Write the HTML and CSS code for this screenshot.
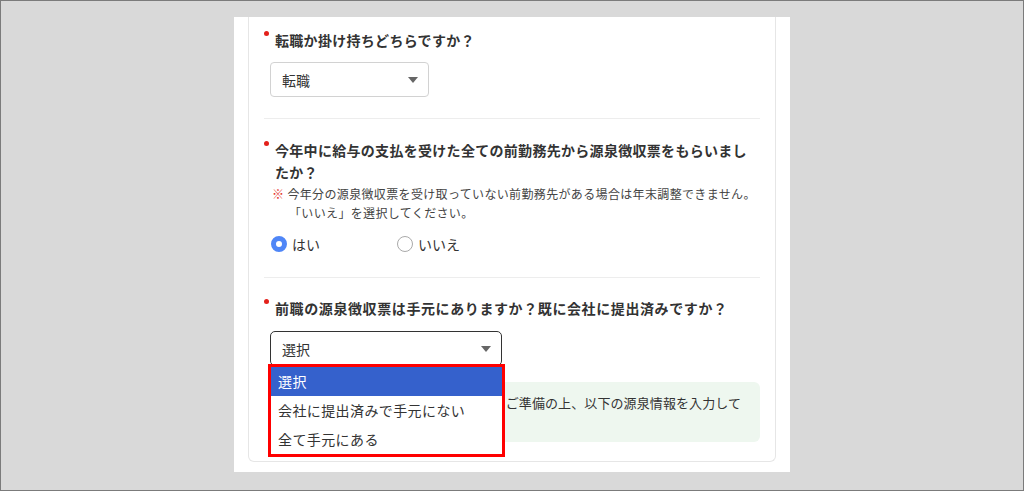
FILE: index.html
```html
<!DOCTYPE html>
<html lang="ja">

<head>
    <meta charset="UTF-8">
    <meta name="viewport" content="width=device-width, initial-scale=1.0">
    <title>源泉徴収票の確認</title>
    <link rel="stylesheet" href="styles.css">
</head>

<body>
    <div class="frame">
        <div class="panel">
            <div class="card">

                <div class="question q1">
                    <div class="qTitle">
                        <span class="required"></span>
                        <span class="qText">転職か掛け持ちどちらですか？</span>
                    </div>
                    <div class="select selectSmall">
                        <span>転職</span>
                        <span class="arrow"></span>
                    </div>
                </div>

                <div class="question q2">
                    <div class="qTitle">
                        <span class="required"></span>
                        <span class="qText">今年中に給与の支払を受けた全ての前勤務先から源泉徴収票をもらいましたか？</span>
                    </div>
                    <p class="note"><span class="mark">※</span> 今年分の源泉徴収票を受け取っていない前勤務先がある場合は年末調整できません。<br>「いいえ」を選択してください。</p>
                    <div class="radios">
                        <div class="radio">
                            <span class="radioIcon checked"></span>
                            <span>はい</span>
                        </div>
                        <div class="radio">
                            <span class="radioIcon"></span>
                            <span>いいえ</span>
                        </div>
                    </div>
                </div>

                <div class="question q3">
                    <div class="qTitle">
                        <span class="required"></span>
                        <span class="qText wide">前職の源泉徴収票は手元にありますか？既に会社に提出済みですか？</span>
                    </div>
                    <div class="selectWrap">
                        <div class="select selectWide focused">
                            <span>選択</span>
                            <span class="arrow"></span>
                        </div>
                        <ul class="dropdown">
                            <li class="active">選択</li>
                            <li>会社に提出済みで手元にない</li>
                            <li>全て手元にある</li>
                        </ul>
                    </div>
                    <div class="info">前職の源泉徴収票が手元にある方は、ご準備の上、以下の源泉情報を入力してください。</div>
                </div>

            </div>
        </div>
    </div>
</body>

</html>
```

FILE: styles.css
```css
body {
    margin: 0;
    padding: 0;
    font-family: "Noto Sans CJK JP", "Noto Sans", sans-serif;
    color: #333;
}

.frame {
    width: 1024px;
    height: 491px;
    box-sizing: border-box;
    border: 1px solid #7b7b7b;
    background: #d9d9d9;
    display: flex;
    justify-content: center;
    padding-top: 16px;
}

.panel {
    width: 556px;
    height: 455px;
    box-sizing: border-box;
    background: #fff;
    padding: 0 14px 10px;
    display: flex;
    flex-direction: column;
}

.card {
    flex: 1;
    border: 1px solid #e6e6e6;
    border-top: none;
    border-radius: 0 0 6px 6px;
    padding: 0 15px;
}

.question {
    border-bottom: 1px solid #ededed;
}

.question.q3 {
    border-bottom: none;
}

.q1 {
    padding: 12px 0 21px;
}

.q2 {
    padding: 20px 0 23px;
}

.q3 {
    padding: 19px 0 19px;
}

.qTitle {
    display: flex;
    align-items: flex-start;
}

.required {
    flex: none;
    width: 5px;
    height: 5px;
    margin-top: 2px;
    margin-right: 6px;
    border-radius: 50%;
    background: #e3211b;
}

.qText {
    font-size: 14px;
    font-weight: 700;
    line-height: 22px;
    letter-spacing: 0.3px;
    color: #333;
}

.qText.wide {
    letter-spacing: 0.6px;
}

.select {
    display: flex;
    align-items: center;
    justify-content: space-between;
    height: 35px;
    box-sizing: border-box;
    padding: 0 10px 0 11px;
    border: 1px solid #d2d2d2;
    border-radius: 4px;
    font-size: 14px;
    color: #333;
    background: #fff;
    margin-top: 11px;
}

.selectSmall {
    width: 159px;
    margin-left: 6px;
}

.selectWide {
    width: 232px;
    margin-top: 0;
}

.focused {
    border: 1.5px solid #333;
    border-radius: 5px;
}

.arrow {
    width: 0;
    height: 0;
    border-left: 5px solid transparent;
    border-right: 5px solid transparent;
    border-top: 6px solid #666;
}

.note {
    margin: 1px 0 0 8px;
    padding-left: 17px;
    text-indent: -17px;
    font-size: 12px;
    line-height: 19px;
    letter-spacing: 0.35px;
    color: #444;
}

.mark {
    color: #e5332a;
}

.radios {
    display: flex;
    margin: 12px 0 0 7px;
    height: 20px;
}

.radio {
    display: flex;
    align-items: center;
    gap: 5px;
    width: 126px;
    font-size: 14px;
    color: #333;
}

.radioIcon {
    width: 16px;
    height: 16px;
    box-sizing: border-box;
    border-radius: 50%;
    border: 1.5px solid #aaa;
    background: #fff;
}

.radioIcon.checked {
    border: 5px solid #4f86f7;
    background: #fff;
}

.selectWrap {
    position: relative;
    margin: 12px 0 0 6px;
}

.dropdown {
    position: absolute;
    left: -2px;
    top: 33px;
    width: 237px;
    box-sizing: border-box;
    margin: 0;
    padding: 0;
    list-style: none;
    border: 3px solid #f00;
    background: #fff;
    z-index: 5;
}

.dropdown li {
    height: 29px;
    line-height: 29px;
    padding-left: 7px;
    font-size: 14px;
    letter-spacing: 0.4px;
    color: #333;
}

.dropdown li.active {
    background: #3561cc;
    color: #fff;
}

.info {
    margin: 16px 0 0 6px;
    height: 60px;
    box-sizing: border-box;
    padding: 10px 12px 0 13px;
    border-radius: 6px;
    background: #eef7ef;
    font-size: 13px;
    line-height: 21px;
    letter-spacing: 0.1px;
    color: #333;
}
```
